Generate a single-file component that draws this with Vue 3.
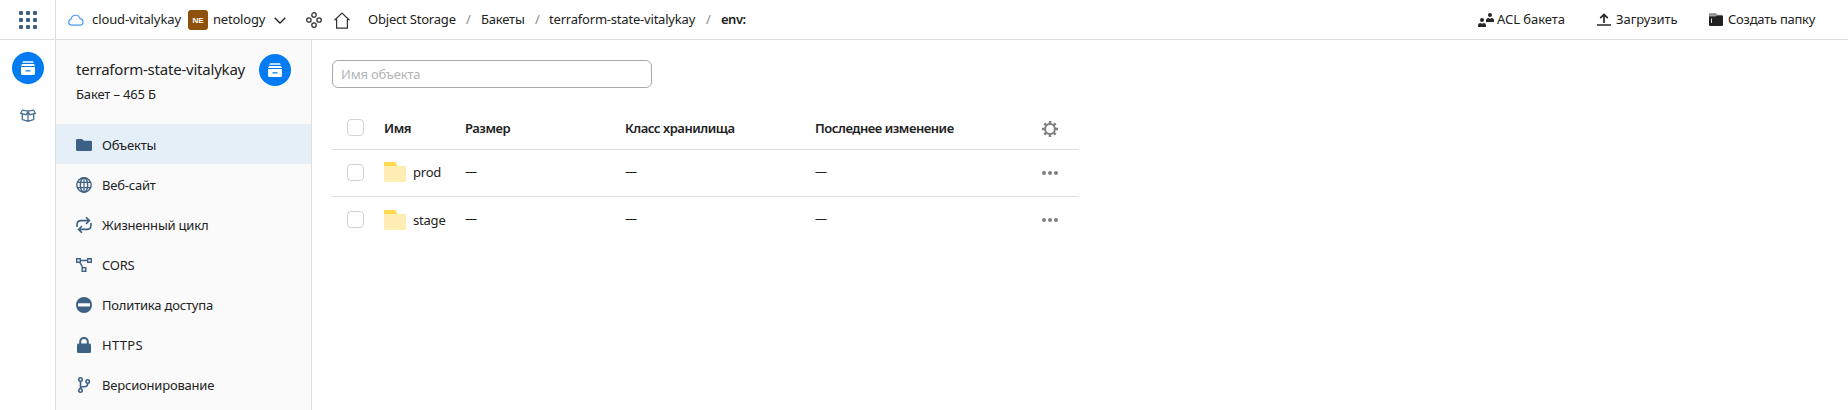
<script setup>
const navItems = [
  { id: 'objects', label: 'Объекты', active: true },
  { id: 'site', label: 'Веб-сайт' },
  { id: 'lifecycle', label: 'Жизненный цикл' },
  { id: 'cors', label: 'CORS' },
  { id: 'policy', label: 'Политика доступа' },
  { id: 'https', label: 'HTTPS' },
  { id: 'versions', label: 'Версионирование' },
]
const folders = ['prod', 'stage']
</script>

<template>
  <div class="page">
    <aside class="rail">
      <div class="apps">
        <svg width="18" height="18" viewBox="0 0 18 18" fill="#3d6185">
          <template v-for="r in 3" :key="r">
            <rect v-for="c in 3" :key="c" :x="(c - 1) * 7" :y="(r - 1) * 7" width="4" height="4" rx="1" />
          </template>
        </svg>
      </div>
      <div class="bucket rail-bucket">
        <svg width="16" height="16" viewBox="0 0 16 16" fill="#fff">
          <path d="M3 1h10l.8 2H2.200z" opacity=".75" /><path d="M2 4h12l1 2H1z" />
          <path fill-rule="evenodd" d="M1 7h14v6.500a1.500 1.500 0 0 1-1.500 1.500h-11A1.500 1.500 0 0 1 1 13.500zM5.500 10.200v1.400h5v-1.400z" />
        </svg>
      </div>
      <svg class="box" width="16" height="13" viewBox="0 0 16 13" fill="none" stroke="#4b6f92" stroke-width="1.300">
        <path d="M2.300 5.500v5L8 12.200l5.700-1.700v-5M8 2.500v9.500M2.200 1.200 8 2.200l5.800-1M2.200 1.200.8 4.400l5.400 1.300L8 2.200l1.800 3.500 5.400-1.300-1.400-3.200" />
      </svg>
    </aside>

    <div class="body">
      <header class="top">
        <div class="scope">
          <svg width="16" height="12" viewBox="0 0 16 12" fill="none" stroke="#4a9cf0" stroke-width="1.200">
            <path d="M3.700 11.200a3.100 3.100 0 0 1-.6-6.100 4.600 4.600 0 0 1 9-.4 3.300 3.300 0 0 1 .3 6.500z" />
          </svg>
          <span class="cloud">cloud-vitalykay</span>
          <span class="avatar">NE</span>
          <span class="project">netology</span>
          <svg class="chevron" width="12" height="7" viewBox="0 0 12 7" fill="none" stroke="#222" stroke-width="1.300"><path d="M.7.7 6 6 11.300.7" /></svg>
          <svg class="cluster" width="16" height="16" viewBox="0 0 16 16" fill="none" stroke="#333" stroke-width="1.300">
            <circle cx="8" cy="2.900" r="2.200" /><circle cx="2.900" cy="8" r="2.200" /><circle cx="13.100" cy="8" r="2.200" /><circle cx="8" cy="13.100" r="2.200" />
          </svg>
          <svg class="home" width="16" height="17" viewBox="0 0 16 17" fill="none" stroke="#333" stroke-width="1.200"><path d="M.5 8.200 8 1l7.500 7.200M2.600 7v9.200h10.800V7" /></svg>
        </div>
        <nav class="crumbs">
          <span>Object Storage</span><i>/</i><span>Бакеты</span><i>/</i><span>terraform-state-vitalykay</span><i>/</i><b>env:</b>
        </nav>
        <div class="actions">
          <span class="action acl">
            <svg width="16" height="14" viewBox="0 0 16 14" fill="#262626"><circle cx="4" cy="7" r="2" /><path d="M0 14v-1.500q0-2.500 2.500-2.500L4 10.700 5.500 10Q8 10 8 12.500V14z" /><circle cx="12" cy="2" r="2" /><path d="M8 9V7.500Q8 5 10.500 5l1.500.7 1.500-.7Q16 5 16 7.500V9z" /></svg>
            <span>ACL бакета</span>
          </span>
          <span class="action upload">
            <svg width="14" height="13" viewBox="0 0 14 13" fill="none" stroke="#262626" stroke-width="1.700"><path d="M0 12h14" stroke-width="1.500" /><path d="M7 10V1.500M3.200 5.200 7 1.400l3.800 3.800" /></svg>
            <span>Загрузить</span>
          </span>
          <span class="action create">
            <svg width="14" height="13" viewBox="0 0 14 13" fill="#222"><path d="M0 2.700V1Q0 .3.800.3h6l1.400 1.500h5v.9z" opacity=".55" /><path d="M0 3.200h7l1-.7h5.200q.8 0 .8.800v8.500Q14 13 12.800 13H1.200Q0 13 0 11.800z" /><path d="M2.500 5.500v4.500" stroke="#ddd" /></svg>
            <span>Создать папку</span>
          </span>
        </div>
      </header>

      <div class="columns">
        <aside class="side">
          <div class="side-head">
            <div>
              <div class="title">terraform-state-vitalykay</div>
              <div class="size">Бакет – 465 Б</div>
            </div>
            <div class="bucket">
              <svg width="16" height="16" viewBox="0 0 16 16" fill="#fff">
                <path d="M3 1h10l.8 2H2.200z" opacity=".75" /><path d="M2 4h12l1 2H1z" />
                <path fill-rule="evenodd" d="M1 7h14v6.500a1.500 1.500 0 0 1-1.500 1.500h-11A1.500 1.500 0 0 1 1 13.500zM5.500 10.200v1.400h5v-1.400z" />
              </svg>
            </div>
          </div>
          <div v-for="n in navItems" :key="n.id" class="item" :class="[n.id, { active: n.active }]">
            <svg width="16" height="16" viewBox="0 0 16 16" fill="none" stroke="#3d6185" stroke-width="1.400">
              <path v-if="n.id === 'objects'" fill="#3d6185" stroke="none" d="M1.300 2H6l1.800 1.700h6.900q1.300 0 1.300 1.300v7.700q0 1.300-1.300 1.300H1.300Q0 14 0 12.700V3.300Q0 2 1.300 2z" />
              <g v-else-if="n.id === 'site'"><circle cx="8" cy="8" r="7.200" /><ellipse cx="8" cy="8" rx="3.700" ry="7.200" /><path d="M1.400 5.300h13.200M1.400 10.700h13.200M8 1v14" stroke-width="1.200" /></g>
              <g v-else-if="n.id === 'lifecycle'" stroke-width="1.600"><path d="M1 10V8q0-4.400 3.800-4.400H13M10 .2 13.400 3.600 10 7M15 6v2q0 4.400-3.800 4.400H3M6 9 2.600 12.400 6 15.800" /></g>
              <g v-else-if="n.id === 'cors'"><path d="M.7 1.700h3.600v3.600H.7zM11.700 1.700h3.600v3.600h-3.600zM6.200 10.700h3.600v3.600H6.200zM4.300 3.500h7.400M3.800 5.300l3 5.400" /></g>
              <g v-else-if="n.id === 'policy'" stroke="none"><circle cx="8" cy="8" r="8" fill="#3d6185" /><rect x="2" y="6.200" width="12" height="3.200" rx=".5" fill="#fafafa" /></g>
              <g v-else-if="n.id === 'https'"><rect x="1" y="6.500" width="14" height="9.500" rx="1.500" fill="#3d6185" stroke="none" /><path d="M4.200 7.500V4.700a3.800 3.800 0 0 1 7.600 0v2.800" stroke-width="2" /></g>
              <g v-else stroke-width="1.600"><circle cx="4.500" cy="2.500" r="1.700" /><circle cx="4.500" cy="13.500" r="1.700" /><circle cx="11.700" cy="4.500" r="1.700" /><path d="M4.500 4.300v7.400M11.700 6.300q0 3.400-3.200 3.400H7q-2.500 0-2.500 2" /></g>
            </svg>
            <span>{{ n.label }}</span>
          </div>
        </aside>

        <main class="main">
          <input class="search" placeholder="Имя объекта" />
          <div class="table">
            <div class="row head">
              <span class="check"></span><span>Имя</span><span>Размер</span><span>Класс хранилища</span><span>Последнее изменение</span>
              <svg width="16" height="16" viewBox="0 0 16 16" fill="none" stroke="#808080">
                <circle cx="8" cy="8" r="4.900" stroke-width="2" />
                <path v-for="k in 8" :key="k" d="M8 0v3" stroke-width="2.500" :transform="`rotate(${k * 45} 8 8)`" />
              </svg>
            </div>
            <div v-for="f in folders" :key="f" class="row">
              <span class="check"></span>
              <span class="name">
                <svg width="22" height="20" viewBox="0 0 22 20"><path d="M0 1q0-1 1-1h9.500q1 0 1.500 1l1.300 3H0z" fill="#ffd84d" /><path d="M0 4h22v16H0z" fill="#ffeeb3" /></svg>
                {{ f }}
              </span>
              <span class="dash">—</span><span class="dash">—</span><span class="dash">—</span>
              <svg width="16" height="4" viewBox="0 0 16 4" fill="#808080"><circle cx="2" cy="2" r="2" /><circle cx="8" cy="2" r="2" /><circle cx="14" cy="2" r="2" /></svg>
            </div>
          </div>
        </main>
      </div>
    </div>
  </div>
</template>

<style>
body { margin: 0; background: #fff; overflow: hidden; }
</style>

<style scoped>
* { box-sizing: border-box; }
svg { display: block; flex: none; }
.page { display: flex; width: 1848px; height: 410px; overflow: hidden; font: 13px/18px "Noto Sans", sans-serif; letter-spacing: -0.2px; color: #222; white-space: nowrap; }
.rail { width: 56px; flex: none; border-right: 1px solid #dedede; display: flex; flex-direction: column; align-items: center; }
.apps { width: 56px; height: 40px; flex: none; border-bottom: 1px solid #dedede; padding: 11px 0 0 19px; }
.bucket { width: 32px; height: 32px; flex: none; border-radius: 50%; background: #027bf3; display: flex; align-items: center; justify-content: center; }
.rail-bucket { margin-top: 12px; margin-left: 1px; }
.box { margin: 25px 0 0 1px; }
.body { flex: 1; min-width: 0; display: flex; flex-direction: column; }
.top { height: 40px; flex: none; border-bottom: 1px solid #dedede; display: flex; align-items: center; }
.scope { width: 312px; flex: none; display: flex; align-items: center; padding-left: 12px; }
.cloud { width: 104px; flex: none; padding: 0 0 2px 8px; letter-spacing: -0.1px; }
.avatar { width: 20px; height: 20px; flex: none; border-radius: 3px; background: #8f5109; color: #fff; font: bold 8px/21px "Liberation Sans", sans-serif; letter-spacing: 0; text-align: center; }
.project { width: 60px; flex: none; padding: 0 0 2px 5px; }
.chevron { margin: 2px 20px 0 6px; }
.home { margin: 1px 0 0 12px; }
.crumbs { display: grid; grid-template-columns: 98px 15px 54px 14px 157px 15px auto; padding-bottom: 2px; }
.crumbs i { font-style: normal; color: #888; letter-spacing: 0; }
.crumbs b { font-weight: 600; letter-spacing: -0.5px; }
.actions { margin-left: auto; margin-right: 32px; display: flex; }
.action { display: flex; align-items: center; gap: 5px; }
.action span { padding-bottom: 2px; }
.acl { width: 119px; gap: 3px; letter-spacing: -0.05px; }
.upload { width: 112px; letter-spacing: -0.05px; }
.create { width: 107px; letter-spacing: -0.25px; }
.columns { flex: 1; display: flex; }
.side { width: 256px; flex: none; background: #fafafa; border-right: 1px solid #dedede; }
.side-head { height: 84px; display: flex; justify-content: space-between; padding: 14px 20px 0; }
.title { font-size: 15px; line-height: 20px; margin-top: 5px; letter-spacing: -0.21px; }
.size { margin-top: 6px; letter-spacing: -0.15px; }
.item { height: 40px; display: flex; align-items: center; gap: 10px; padding-left: 20px; }
.item svg { margin-top: 1px; }
.item span { padding-top: 2px; }
.https span { letter-spacing: 0.3px; }
.item.active { background: #e4eff8; }
.main { padding: 20px 0 0 20px; }
.search { display: block; width: 320px; height: 28px; border: 1px solid #aaa; border-radius: 6px; padding: 0 8px; background: #fff; font: inherit; letter-spacing: -0.2px; outline: none; }
.search::placeholder { color: #b5b5b5; opacity: 1; }
.table { width: 747px; margin-top: 20px; }
.row { height: 47px; display: grid; grid-template-columns: 37px 81px 160px 190px 227px 37px; padding: 0 0 2px 15px; align-items: center; }
.row.head { height: 42px; padding-bottom: 0; border-bottom: 1px solid #dedede; font-weight: 600; letter-spacing: -0.46px; }
.row:nth-child(2) { border-bottom: 1px solid #dedede; }
.head > span:not(.check) { padding-bottom: 1px; }
.check { width: 17px; height: 17px; border: 1px solid #d2d2d2; border-radius: 4px; }
.head .check { margin-top: -3px; }
.name { display: flex; align-items: center; gap: 7px; }
.row > svg { margin-top: 1px; }
.head > svg { margin-top: 0; }
.dash { font-size: 12px; padding-bottom: 1px; }
</style>
